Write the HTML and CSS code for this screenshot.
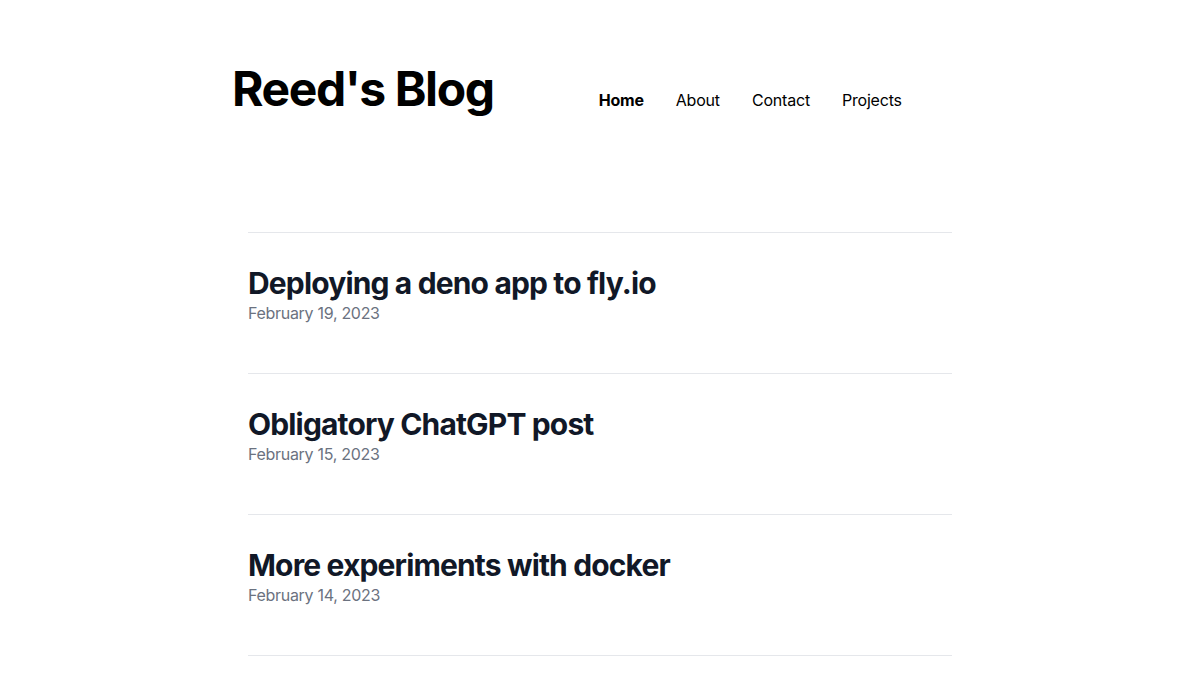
FILE: index.html
```html
<!DOCTYPE html>
<html lang="en">
<head>
<meta charset="utf-8">
<title>Reed's Blog</title>
<link rel="stylesheet" href="styles.css">
</head>
<body>
<header class="site-header">
  <h1 class="site-title">Reed's Blog</h1>
  <nav class="site-nav">
    <a class="nav-link active" href="#">Home</a>
    <a class="nav-link" href="#">About</a>
    <a class="nav-link" href="#">Contact</a>
    <a class="nav-link" href="#">Projects</a>
  </nav>
</header>
<main class="posts">
  <article class="post">
    <h2 class="post-title">Deploying a deno app to fly.io</h2>
    <p class="post-date">February 19, 2023</p>
  </article>
  <article class="post">
    <h2 class="post-title">Obligatory ChatGPT post</h2>
    <p class="post-date">February 15, 2023</p>
  </article>
  <article class="post">
    <h2 class="post-title">More experiments with docker</h2>
    <p class="post-date">February 14, 2023</p>
  </article>
</main>
</body>
</html>
```
FILE: styles.css
```css
* { box-sizing: border-box; }
body {
  margin: 0;
  font-family: Inter, "Noto Sans", sans-serif;
  color: #000;
  background: #fff;
}
.site-header {
  width: 736px;
  margin: 65px auto 0;
  display: flex;
  align-items: baseline;
}
.site-title {
  margin: 0;
  font-size: 48px;
  line-height: 48px;
  font-weight: 700;
  letter-spacing: -1.4px;
}
.site-nav {
  display: flex;
  gap: 32px;
  margin-left: 105px;
}
.nav-link {
  color: #000;
  text-decoration: none;
  font-size: 16px;
  line-height: 24px;
  letter-spacing: -0.2px;
}
.nav-link.active { font-weight: 700; }
.posts {
  width: 704px;
  margin: 119px auto 0;
  border-bottom: 1px solid #e5e7eb;
}
.post {
  border-top: 1px solid #e5e7eb;
  padding: 32px 0 48px;
}
.post-title {
  margin: 0;
  font-size: 30px;
  line-height: 36px;
  font-weight: 700;
  color: #111827;
  letter-spacing: -0.85px;
}
.post-date {
  margin: 0;
  font-size: 16px;
  line-height: 24px;
  color: #6b7280;
  letter-spacing: -0.3px;
}
```
